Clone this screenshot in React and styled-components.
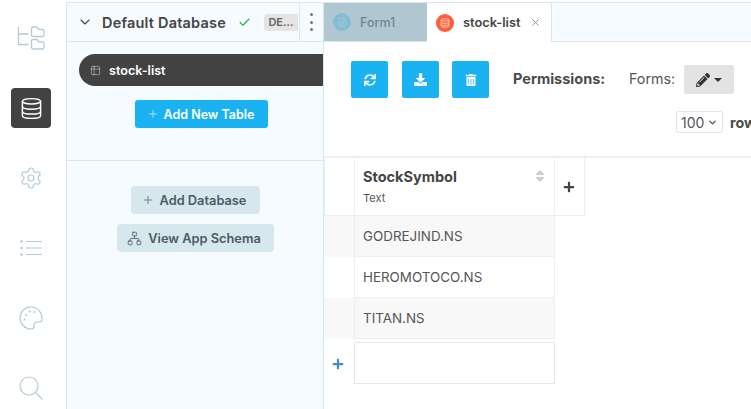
import React from 'react';
import styled, { createGlobalStyle } from 'styled-components';
import { Check, ChevronDown, Plus, X, Table2, Network, Settings, FileText } from 'lucide-react';
import { FaSync, FaDownload, FaTrashAlt, FaPencilAlt, FaPlus } from 'react-icons/fa';

const Global = createGlobalStyle`
  html, body { margin: 0; padding: 0; background: #fff; }
  body { font-family: Inter, "Liberation Sans", sans-serif; color: #444; }
  * { box-sizing: border-box; }
`;

const Page = styled.div`
  width: 751px; height: 409px; display: flex; overflow: hidden; background: #fff;
`;
const Rail = styled.nav`
  width: 66px; flex: none; padding: 3px 4px 0 0; display: flex; flex-direction: column; align-items: center;
`;
const RailSlot = styled.div`
  height: 70px; width: 40px; flex: none; display: flex; align-items: center; justify-content: center;
  color: #b2cbd6;
`;
const ActiveIcon = styled.div`
  width: 40px; height: 40px; border-radius: 4px; background: #424242; color: #fff;
  display: flex; align-items: center; justify-content: center;
`;
const Panel = styled.aside`
  width: 258px; flex: none; margin-top: 2px; background: #f6fbff;
  border-top: 1px solid #d6e8ef; border-left: 1px solid #d6e8ef; border-right: 1px solid #d6e8ef;
  display: flex; flex-direction: column; overflow: hidden;
`;
const PanelHead = styled.div`
  height: 39px; flex: none; display: flex; align-items: center; border-bottom: 1px solid #d6e8ef;
`;
const DbTitle = styled.div`
  width: 232px; flex: none; display: flex; align-items: center; padding-left: 10px; overflow: hidden;
`;
const DbName = styled.span`
  margin-left: 9px; font-size: 14.5px; font-weight: 600; color: #454545; white-space: nowrap; letter-spacing: .2px;
`;
const Badge = styled.span`
  margin-left: 13px; width: 34px; height: 17px; flex: none; background: #e4e4e4; border-radius: 3px 0 0 3px;
  font-size: 11px; font-weight: 600; color: #666; display: flex; align-items: center; justify-content: center;
`;
const Kebab = styled.div`
  flex: 1; align-self: stretch; border-left: 1px solid #d6e8ef; display: flex; flex-direction: column;
  align-items: center; justify-content: center; gap: 4.500px;
`;
const Dot = styled.i`
  width: 3px; height: 3px; border-radius: 50%; background: #6c7a80; display: block;
`;
const TablesArea = styled.div`
  height: 119px; flex: none; border-bottom: 1px solid #d6e8ef; padding-top: 12px;
  display: flex; flex-direction: column;
`;
const TablePill = styled.div`
  margin-left: 12px; height: 32px; width: 260px; flex: none; background: #424242; border-radius: 16px 0 0 16px; color: #fff;
  display: flex; align-items: center; gap: 8px; padding-left: 11px; font-size: 12.6px; font-weight: 600;
`;
const PrimaryAction = styled.button`
  margin: 14px auto 0 68px; height: 28px; width: 133px; border: 0; border-radius: 3px; background: #1ab2f0; color: #fff;
  display: flex; align-items: center; justify-content: center; gap: 5px; font: 600 12.5px Inter, sans-serif; padding: 0 2px 0 0;
`;
const SecondaryArea = styled.div`
  flex: 1; padding-top: 25px; display: flex; flex-direction: column; align-items: center; gap: 10px;
`;
const SecondaryAction = styled.button`
  height: 28px; width: ${p => p.$w}px; border: 0; border-radius: 4px; background: #d6e7ee; color: #4b5b63;
  display: flex; align-items: center; justify-content: center; gap: 6px; font: 600 12.8px Inter, sans-serif; padding: 0 2px 0 0;
`;
const Main = styled.main`
  flex: 1; min-width: 0; display: flex; flex-direction: column; overflow: hidden;
`;
const TabBar = styled.div`
  height: 40px; flex: none; margin-top: 2px; background: #f6fbff; border-top: 1px solid #d6e8ef; border-bottom: 1px solid #d6e8ef;
  display: flex;
`;
const Tab = styled.div`
  display: flex; align-items: center; height: ${p => p.$active ? 39 : 38}px; width: ${p => p.$w}px;
  padding-left: 9px; gap: 9px; font-size: ${p => p.$active ? 12.8 : 12.5}px; flex: none;
  background: ${p => p.$active ? '#fff' : '#b0c7d0'};
  color: ${p => p.$active ? '#444' : '#6d8792'};
  font-weight: ${p => p.$active ? 600 : 500};
  border-right: ${p => p.$active ? '1px solid #d6e8ef' : '0'};
`;
const TabIcon = styled.span`
  width: 18px; height: 18px; border-radius: 50%; flex: none; display: flex; align-items: center; justify-content: center;
  background: ${p => p.$bg}; color: ${p => p.$fg};
`;
const Toolbar = styled.div`
  height: 116px; flex: none; border-bottom: 2px solid #eee; padding: 19px 0 0 27px;
  display: flex; flex-direction: column;
`;
const ToolRow = styled.div`
  display: flex; align-items: center; white-space: nowrap;
`;
const IconButton = styled.button`
  width: 37px; height: 37px; border: 0; border-radius: 2px; background: #1ab2f0; color: #fff; padding: 0; flex: none;
  margin-right: ${p => p.$mr}px; display: flex; align-items: center; justify-content: center;
`;
const PermLabel = styled.span`
  font-size: 14.5px; font-weight: 700; color: #4a4a4a; margin-left: 10px; width: 116px; position: relative; top: -1px;
`;
const FormsLabel = styled.span`
  font-size: 14.3px; color: #555; width: 55px; position: relative; top: -1px;
`;
const EditButton = styled.div`
  width: 50px; height: 29px; background: #e3e3e3; border-radius: 2px; display: flex; align-items: center; justify-content: center; gap: 4px; color: #333;
`;
const Caret = styled.i`
  width: 0; height: 0; border-left: 4px solid transparent; border-right: 4px solid transparent; border-top: 4px solid #333; display: block;
`;
const RowsLine = styled.div`
  margin: 13px 0 0 325px; display: flex; align-items: center; white-space: nowrap;
`;
const Select = styled.div`
  width: 47px; height: 22px; border: 1px solid #e6e6e6; border-radius: 2px; background: #fff; display: flex; align-items: center;
  padding-left: 4px; gap: 3px; font-size: 14px; color: #555; flex: none;
`;
const RowsText = styled.span`
  margin-left: 7px; font-size: 14.3px; font-weight: 700; color: #4a4a4a;
`;
const Grid = styled.div`
  display: grid; grid-template-columns: 30px 201px 30px; width: 261px;
`;
const Corner = styled.div`
  height: 58px; border: solid #eee; border-width: 0 0 1px 1px;
`;
const HeaderCell = styled.div`
  height: 58px; border: solid #eee; border-width: 0 1px 1px 1px; padding: 9px 0 0 8px; position: relative;
`;
const HeaderName = styled.div`
  font-size: 14.5px; font-weight: 700; color: #444; line-height: 20px;
`;
const HeaderType = styled.div`
  font-size: 11px; color: #555; margin-top: 4px; line-height: 14px;
`;
const SortMark = styled.div`
  position: absolute; right: 9px; top: 12px; display: flex; flex-direction: column; gap: 2px;
`;
const SortUp = styled.i`
  display: block; width: 0; height: 0; border-left: 5px solid transparent; border-right: 5px solid transparent; border-bottom: 5px solid #cfcfcf;
`;
const SortDown = styled.i`
  display: block; width: 0; height: 0; border-left: 5px solid transparent; border-right: 5px solid transparent; border-top: 5px solid #cfcfcf;
`;
const AddColumn = styled.div`
  height: 58px; border: solid #eee; border-width: 0 1px 1px 0; color: #444; display: flex; align-items: center; justify-content: center; padding-right: 2px;
`;
const RowNum = styled.div`
  height: 41px; background: ${p => p.$odd ? '#f8f8f8' : '#fff'};
`;
const Cell = styled.div`
  height: 41px; border: solid #eee; border-width: 0 1px 1px 1px; background: ${p => p.$odd ? '#f8f8f8' : '#fff'};
  display: flex; align-items: center; padding: 0 0 0 8px; font-size: 13.4px; color: #555;
`;
const NewRowMark = styled.div`
  height: 42px; margin-top: 3px; color: #3f8fd0; display: flex; align-items: center; justify-content: center; padding: 2px 2px 0 0;
`;
const NewCell = styled.div`
  height: 42px; margin-top: 3px; border: 1px solid #e8e8e8;
`;
const Spacer = styled.div``;

const TreeIcon = () => (
  <svg width="28" height="25" viewBox="0 0 28 25" fill="none" stroke="currentColor" strokeWidth="1.3" strokeLinejoin="round">
    <path d="M1.500 1v17.500h10M1.500 8h10" />
    <path d="M14.500 2.500a1.500 1.500 0 0 1 1.500-1.500h4l2 2.500h3.500a1.500 1.500 0 0 1 1.500 1.500v4a1.500 1.500 0 0 1-1.500 1.500H16a1.500 1.500 0 0 1-1.500-1.500z" />
    <path d="M14.500 15a1.500 1.500 0 0 1 1.500-1.500h4l2 2.500h3.500a1.500 1.500 0 0 1 1.500 1.500v4a1.500 1.500 0 0 1-1.500 1.500H16a1.500 1.500 0 0 1-1.500-1.500z" />
  </svg>
);
const DbIcon = ({ size = 24, sw = 1.5 }) => (
  <svg width={size} height={size} viewBox="0 0 24 24" fill="none" stroke="currentColor" strokeWidth={sw}>
    <ellipse cx="12" cy="4.500" rx="9.500" ry="2.800" />
    <path d="M2.500 4.500v15c0 1.600 4.200 2.800 9.500 2.800s9.500-1.200 9.500-2.800v-15" />
    <path d="M2.500 10c0 1.600 4.200 2.800 9.500 2.800s9.500-1.200 9.500-2.800M2.500 15c0 1.600 4.200 2.800 9.500 2.800s9.500-1.200 9.500-2.800" />
  </svg>
);
const ListIcon = () => (
  <svg width="22" height="16" viewBox="0 0 22 16" fill="none" stroke="currentColor" strokeWidth="1.200">
    <path d="M6 1.500h16M6 8h16M6 14.500h16" />
    <g fill="currentColor" stroke="none">
      <circle cx="1.500" cy="1.500" r="1.300" /><circle cx="1.500" cy="8" r="1.300" /><circle cx="1.500" cy="14.500" r="1.300" />
    </g>
  </svg>
);
const PaletteIcon = () => (
  <svg width="24" height="24" viewBox="0 0 24 24" fill="none" stroke="currentColor" strokeWidth="1.200">
    <path d="M12 1C5.900 1 1 5.900 1 12s4.900 11 11 11c2 0 3-1.300 3-3 0-2.200 1-4 3-4h3c1.500 0 2-1 2-3C23 5.500 18 1 12 1z" />
    <g fill="currentColor" stroke="none">
      <circle cx="7" cy="9" r="1" /><circle cx="11" cy="5.500" r="1" /><circle cx="15.500" cy="6" r="1" /><circle cx="5.500" cy="13.500" r="1" />
    </g>
  </svg>
);
const SearchIcon = () => (
  <svg width="24" height="24" viewBox="0 0 24 24" fill="none" stroke="currentColor" strokeWidth="1.200">
    <circle cx="10" cy="10" r="9" />
    <path d="M16.500 16.500L23.500 23.500" />
  </svg>
);

const rows = ['GODREJIND.NS', 'HEROMOTOCO.NS', 'TITAN.NS'];

export default function App() {
  return (
    <Page>
      <Global />
      <Rail>
        <RailSlot><TreeIcon /></RailSlot>
        <RailSlot><ActiveIcon><DbIcon size={23} /></ActiveIcon></RailSlot>
        <RailSlot><Settings size={24} strokeWidth={1.2} /></RailSlot>
        <RailSlot><ListIcon /></RailSlot>
        <RailSlot><PaletteIcon /></RailSlot>
        <RailSlot><SearchIcon /></RailSlot>
      </Rail>
      <Panel>
        <PanelHead>
          <DbTitle>
            <ChevronDown size={16} color="#444" strokeWidth={1.6} />
            <DbName>Default Database</DbName>
            <Check size={13} color="#22b35e" strokeWidth={2.2} style={{ marginLeft: 12, flex: 'none' }} />
            <Badge>DE...</Badge>
          </DbTitle>
          <Kebab><Dot /><Dot /><Dot /></Kebab>
        </PanelHead>
        <TablesArea>
          <TablePill><Table2 size={11} strokeWidth={1.3} color="#ccc" />stock-list</TablePill>
          <PrimaryAction><Plus size={12} color="#a9def5" />Add New Table</PrimaryAction>
        </TablesArea>
        <SecondaryArea>
          <SecondaryAction $w={129}><Plus size={12} color="#6f8189" />Add Database</SecondaryAction>
          <SecondaryAction $w={157}><Network size={15} strokeWidth={1.3} />View App Schema</SecondaryAction>
        </SecondaryArea>
      </Panel>
      <Main>
        <TabBar>
          <Tab $w={103}><TabIcon $bg="#82bdd7" $fg="#b0c7d0"><FileText size={10} /></TabIcon>Form1</Tab>
          <Tab $w={125} $active><TabIcon $bg="#ff5c39" $fg="#ffd9cf"><DbIcon size={10} sw={2} /></TabIcon>stock-list<X size={11} color="#888" style={{ marginLeft: 1 }} /></Tab>
        </TabBar>
        <Toolbar>
          <ToolRow>
            <IconButton $mr={14}><FaSync size={12} /></IconButton>
            <IconButton $mr={13}><FaDownload size={13} /></IconButton>
            <IconButton $mr={14}><FaTrashAlt size={12} /></IconButton>
            <PermLabel>Permissions:</PermLabel>
            <FormsLabel>Forms:</FormsLabel>
            <EditButton><FaPencilAlt size={14} /><Caret /></EditButton>
          </ToolRow>
          <RowsLine>
            <Select>100<ChevronDown size={11} strokeWidth={3} /></Select>
            <RowsText>rows</RowsText>
          </RowsLine>
        </Toolbar>
        <Grid>
          <Corner />
          <HeaderCell>
            <HeaderName>StockSymbol</HeaderName>
            <HeaderType>Text</HeaderType>
            <SortMark><SortUp /><SortDown /></SortMark>
          </HeaderCell>
          <AddColumn><FaPlus size={12} /></AddColumn>
          {rows.map((r, i) => (
            <React.Fragment key={r}>
              <RowNum $odd={i % 2 === 0} />
              <Cell $odd={i % 2 === 0}>{r}</Cell>
              <Spacer />
            </React.Fragment>
          ))}
          <NewRowMark><FaPlus size={12} /></NewRowMark>
          <NewCell />
          <Spacer />
        </Grid>
      </Main>
    </Page>
  );
}
